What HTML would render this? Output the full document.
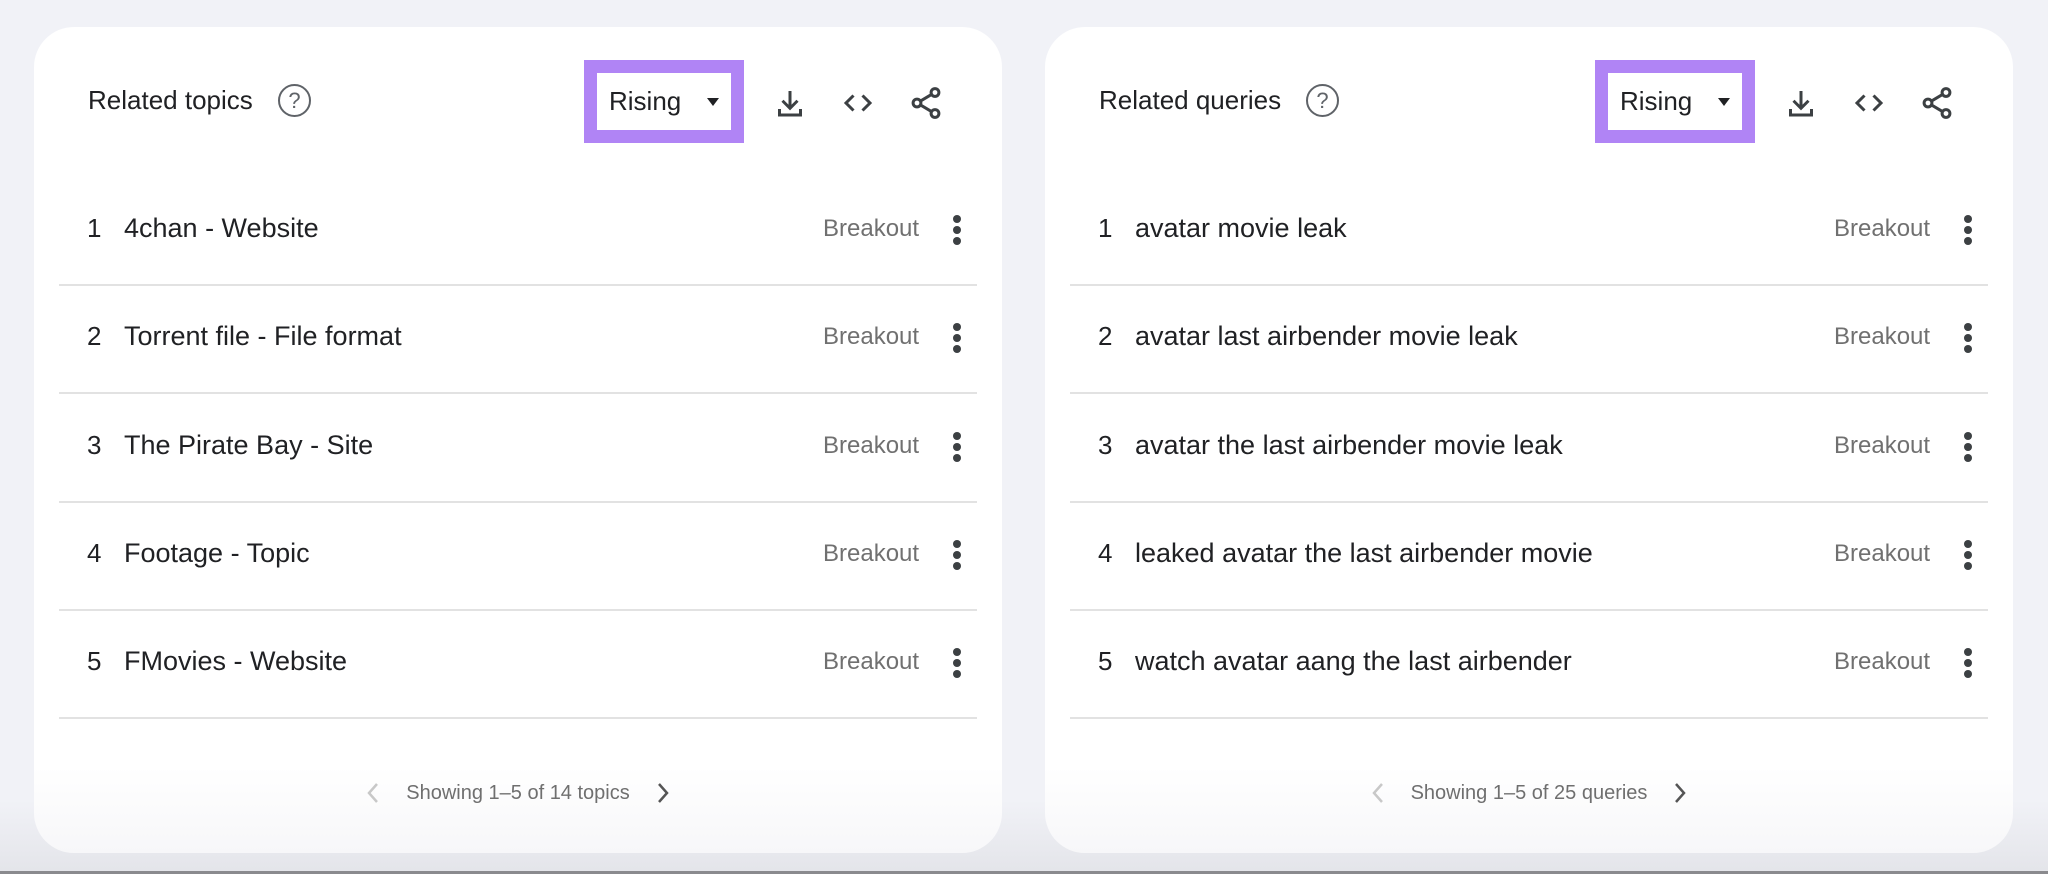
<!DOCTYPE html>
<html><head><meta charset="utf-8"><style>
*{margin:0;padding:0;box-sizing:border-box}
body{width:2048px;height:874px;overflow:hidden;background:linear-gradient(#f1f2f7 0,#f1f2f7 800px,#e4e5ea 870px);font-family:"Liberation Sans",sans-serif;position:relative}
.bar{position:absolute;left:0;top:871px;width:2048px;height:3px;background:#8a8a8e}
.card{position:absolute;top:27px;width:968px;height:826px;background:linear-gradient(#fff 0,#fff 740px,#f7f7f9 826px);border-radius:40px}
.t{position:absolute;white-space:nowrap}
.title{left:54px;top:58px;font-size:26px;color:#202124;line-height:30px}
.help{position:absolute;top:57px;width:33px;height:33px;border:2.5px solid #5f6368;border-radius:50%;color:#5f6368;font-size:22px;text-align:center;line-height:29px}
.pbox{position:absolute;left:550px;top:33px;width:160px;height:83px;border:13px solid #b084f5;background:#fff}
.rising{position:absolute;left:12px;top:13px;font-size:26px;color:#202124;line-height:30px}
.tri{position:absolute;left:110px;top:25px;width:0;height:0;border-left:6px solid transparent;border-right:6px solid transparent;border-top:8px solid #202124}
svg.ic{position:absolute;top:58px}
.num{font-size:26px;color:#202124;left:53px;line-height:30px}
.txt{font-size:27px;color:#202124;left:90px;line-height:30px}
.brk{font-size:24px;color:#707070;left:789px;line-height:30px}
.dots{position:absolute;left:919px;width:9px}
.dots i{display:block;width:8px;height:8px;border-radius:50%;background:#3c4043;margin-bottom:3px}
.div{position:absolute;left:25px;width:918px;height:2px;background:#e2e2e2}
.foot{position:absolute;left:0;width:968px;top:751px;text-align:center;font-size:20px;color:#6f6f6f;line-height:28px}
.foot span{display:inline-block;vertical-align:middle}
.foot svg{vertical-align:middle}
</style></head><body>

<div class="card" style="left:34px">
<div class="t title">Related topics</div>
<div class="help" style="left:244px">?</div>
<div class="pbox"><div class="rising">Rising</div><div class="tri"></div></div>
<svg class="ic" style="left:738px" width="36" height="36" viewBox="0 0 24 24"><path d="M12 4v11M7 10.5l5 5 5-5M5 16v4h14v-4" fill="none" stroke="#3c4043" stroke-width="2"/></svg>
<svg class="ic" style="left:806px" width="36" height="36" viewBox="0 0 24 24"><path d="M9 7l-5 5 5 5M15 7l5 5-5 5" fill="none" stroke="#3c4043" stroke-width="2"/></svg>
<svg class="ic" style="left:874px" width="36" height="36" viewBox="0 0 24 24"><circle cx="18" cy="5" r="2.6" fill="none" stroke="#3c4043" stroke-width="2"/><circle cx="6" cy="12" r="2.6" fill="none" stroke="#3c4043" stroke-width="2"/><circle cx="18" cy="19" r="2.6" fill="none" stroke="#3c4043" stroke-width="2"/><path d="M8.3 10.7l7.4-4.4M8.3 13.3l7.4 4.4" stroke="#3c4043" stroke-width="2"/></svg>

<div class="t num" style="top:186px">1</div><div class="t txt" style="top:186px">4chan - Website</div><div class="t brk" style="top:187px">Breakout</div><div class="dots" style="top:188px"><i></i><i></i><i></i></div><div class="div" style="top:257px"></div>
<div class="t num" style="top:294px">2</div><div class="t txt" style="top:294px">Torrent file - File format</div><div class="t brk" style="top:295px">Breakout</div><div class="dots" style="top:296px"><i></i><i></i><i></i></div><div class="div" style="top:365px"></div>
<div class="t num" style="top:403px">3</div><div class="t txt" style="top:403px">The Pirate Bay - Site</div><div class="t brk" style="top:404px">Breakout</div><div class="dots" style="top:405px"><i></i><i></i><i></i></div><div class="div" style="top:474px"></div>
<div class="t num" style="top:511px">4</div><div class="t txt" style="top:511px">Footage - Topic</div><div class="t brk" style="top:512px">Breakout</div><div class="dots" style="top:513px"><i></i><i></i><i></i></div><div class="div" style="top:582px"></div>
<div class="t num" style="top:619px">5</div><div class="t txt" style="top:619px">FMovies - Website</div><div class="t brk" style="top:620px">Breakout</div><div class="dots" style="top:621px"><i></i><i></i><i></i></div><div class="div" style="top:690px"></div>

<div class="foot"><svg width="14" height="22" viewBox="0 0 14 22" style="margin-right:26px"><path d="M11 2L3 11l8 9" fill="none" stroke="#c8c8c8" stroke-width="2.5"/></svg><span>Showing 1–5 of 14 topics</span><svg width="14" height="22" viewBox="0 0 14 22" style="margin-left:26px"><path d="M3 2l8 9-8 9" fill="none" stroke="#555" stroke-width="2.5"/></svg></div>
</div>

<div class="card" style="left:1045px">
<div class="t title">Related queries</div>
<div class="help" style="left:261px">?</div>
<div class="pbox"><div class="rising">Rising</div><div class="tri"></div></div>
<svg class="ic" style="left:738px" width="36" height="36" viewBox="0 0 24 24"><path d="M12 4v11M7 10.5l5 5 5-5M5 16v4h14v-4" fill="none" stroke="#3c4043" stroke-width="2"/></svg>
<svg class="ic" style="left:806px" width="36" height="36" viewBox="0 0 24 24"><path d="M9 7l-5 5 5 5M15 7l5 5-5 5" fill="none" stroke="#3c4043" stroke-width="2"/></svg>
<svg class="ic" style="left:874px" width="36" height="36" viewBox="0 0 24 24"><circle cx="18" cy="5" r="2.6" fill="none" stroke="#3c4043" stroke-width="2"/><circle cx="6" cy="12" r="2.6" fill="none" stroke="#3c4043" stroke-width="2"/><circle cx="18" cy="19" r="2.6" fill="none" stroke="#3c4043" stroke-width="2"/><path d="M8.3 10.7l7.4-4.4M8.3 13.3l7.4 4.4" stroke="#3c4043" stroke-width="2"/></svg>

<div class="t num" style="top:186px">1</div><div class="t txt" style="top:186px">avatar movie leak</div><div class="t brk" style="top:187px">Breakout</div><div class="dots" style="top:188px"><i></i><i></i><i></i></div><div class="div" style="top:257px"></div>
<div class="t num" style="top:294px">2</div><div class="t txt" style="top:294px">avatar last airbender movie leak</div><div class="t brk" style="top:295px">Breakout</div><div class="dots" style="top:296px"><i></i><i></i><i></i></div><div class="div" style="top:365px"></div>
<div class="t num" style="top:403px">3</div><div class="t txt" style="top:403px">avatar the last airbender movie leak</div><div class="t brk" style="top:404px">Breakout</div><div class="dots" style="top:405px"><i></i><i></i><i></i></div><div class="div" style="top:474px"></div>
<div class="t num" style="top:511px">4</div><div class="t txt" style="top:511px">leaked avatar the last airbender movie</div><div class="t brk" style="top:512px">Breakout</div><div class="dots" style="top:513px"><i></i><i></i><i></i></div><div class="div" style="top:582px"></div>
<div class="t num" style="top:619px">5</div><div class="t txt" style="top:619px">watch avatar aang the last airbender</div><div class="t brk" style="top:620px">Breakout</div><div class="dots" style="top:621px"><i></i><i></i><i></i></div><div class="div" style="top:690px"></div>

<div class="foot"><svg width="14" height="22" viewBox="0 0 14 22" style="margin-right:26px"><path d="M11 2L3 11l8 9" fill="none" stroke="#c8c8c8" stroke-width="2.5"/></svg><span>Showing 1–5 of 25 queries</span><svg width="14" height="22" viewBox="0 0 14 22" style="margin-left:26px"><path d="M3 2l8 9-8 9" fill="none" stroke="#555" stroke-width="2.5"/></svg></div>
</div>

<div class="bar"></div>
</body></html>
